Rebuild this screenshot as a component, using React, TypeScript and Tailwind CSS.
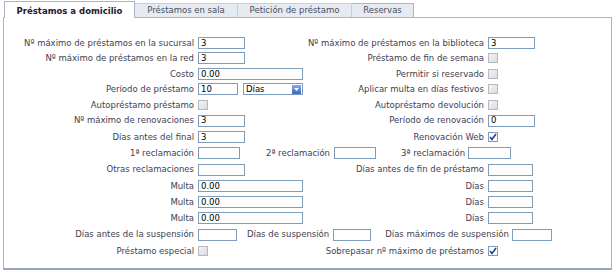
import React from "react";

const Input = ({ w, v = "" }: { w: number; v?: string }) => (
  <div
    className="h-[12px] border border-[#7f9db9] bg-white flex items-center pl-[2px] text-black text-[8.5px] leading-none shrink-0"
    style={{ width: w }}
  >
    {v}
  </div>
);

const Check = ({ on = false }: { on?: boolean }) =>
  on ? (
    <div className="w-[10px] h-[10px] border border-[#7f9db9] bg-white flex items-center justify-center">
      <svg width="8" height="8" viewBox="0 0 8 8">
        <path d="M1 4 L3 6.5 L7 1" stroke="#213f99" strokeWidth="1.6" fill="none" />
      </svg>
    </div>
  ) : (
    <div className="w-[10px] h-[10px] border border-[#b4bac4] bg-gradient-to-br from-[#f4f4f4] to-[#dcdcdc]" />
  );

const Select = () => (
  <div className="w-[60px] h-[12px] border border-[#7f9db9] bg-white flex items-center ml-[5px]">
    <span className="pl-[2px] flex-1 text-black text-[8.5px] leading-none">Días</span>
    <div className="w-[9px] h-[9px] mr-[1px] bg-gradient-to-b from-[#8aa9e8] to-[#3b67cf] flex items-center justify-center">
      <svg width="5" height="3" viewBox="0 0 5 3">
        <path d="M0 0 L5 0 L2.5 3 Z" fill="white" />
      </svg>
    </div>
  </div>
);

type Row = {
  l?: string;
  f?: React.ReactNode;
  r?: string;
  rf?: React.ReactNode;
};

const Std = ({ row, h }: { row: Row; h: string }) => (
  <div className={`flex items-center ${h}`}>
    <div className="w-[190px] text-right">{row.l}</div>
    <div className="w-[107px] ml-[4px] flex items-center">{row.f}</div>
    <div className="w-[179px] text-right">{row.r}</div>
    <div className="ml-[4px] flex items-center">{row.rf}</div>
  </div>
);

export default function App() {
  const rowsA: Row[] = [
    { l: "Nº máximo de préstamos en la sucursal", f: <Input w={47} v="3" />, r: "Nº máximo de préstamos en la biblioteca", rf: <Input w={47} v="3" /> },
    { l: "Nº máximo de préstamos en la red", f: <Input w={47} v="3" />, r: "Préstamo de fin de semana", rf: <Check /> },
    { l: "Costo", f: <Input w={105} v="0.00" />, r: "Permitir si reservado", rf: <Check /> },
    { l: "Período de préstamo", f: <><Input w={40} v="10" /><Select /></>, r: "Aplicar multa en días festivos", rf: <Check /> },
    { l: "Autopréstamo préstamo", f: <Check />, r: "Autopréstamo devolución", rf: <Check /> },
  ];
  const rowsB1: Row[] = [
    { l: "Nº máximo de renovaciones", f: <Input w={47} v="3" />, r: "Período de renovación", rf: <Input w={47} v="0" /> },
    { l: "Días antes del final", f: <Input w={47} v="3" />, r: "Renovación Web", rf: <Check on /> },
  ];
  const rowsB2: Row[] = [
    { l: "Otras reclamaciones", f: <Input w={47} />, r: "Días antes de fin de préstamo", rf: <Input w={45} /> },
    { l: "Multa", f: <Input w={105} v="0.00" />, r: "Días", rf: <Input w={45} /> },
    { l: "Multa", f: <Input w={105} v="0.00" />, r: "Días", rf: <Input w={45} /> },
    { l: "Multa", f: <Input w={105} v="0.00" />, r: "Días", rf: <Input w={45} /> },
  ];

  return (
    <div
      className="w-[615px] h-[276px] bg-white text-[#3e4152] text-[8.5px] leading-none whitespace-nowrap"
      style={{ fontFamily: '"DejaVu Sans", Verdana, sans-serif' }}
    >
      <div className="mx-[3px] pt-[1px]">
        <div className="flex h-[17px] pl-[1px] relative z-10">
          <div className="w-[131px] h-[17px] border border-b-0 border-[#a9b5c6] bg-white font-bold text-[#1e2030] flex items-center justify-center pt-[2px]">
            Préstamos a domicilio
          </div>
          <div className="flex self-end h-[15px] border-b border-[#a9b5c6] bg-[#e6ebf2] text-[#4a4e60]">
            <div className="w-[103px] border-t border-r border-[#c6cedb] flex items-center justify-center">Préstamos en sala</div>
            <div className="w-[114px] border-t border-r border-[#c6cedb] flex items-center justify-center">Petición de préstamo</div>
            <div className="w-[62px] border-t border-r border-[#a9b5c6] flex items-center justify-center">Reservas</div>
          </div>
        </div>
        <div className="-mt-px h-[253px] border border-[#a9b5c6] border-b-2 border-b-[#9aa6b8] pt-[17px]">
          {rowsA.map((r, i) => (
            <Std key={"a" + i} row={r} h="h-[15.5px]" />
          ))}
          {rowsB1.map((r, i) => (
            <Std key={"b" + i} row={r} h="h-[16.3px]" />
          ))}
          <div className="flex items-center h-[16.3px]">
            <div className="w-[190px] text-right">1ª reclamación</div>
            <div className="ml-[4px]"><Input w={42} /></div>
            <div className="ml-[26px]">2ª reclamación</div>
            <div className="ml-[4px]"><Input w={42} /></div>
            <div className="ml-[25px]">3ª reclamación</div>
            <div className="ml-[3px]"><Input w={43} /></div>
          </div>
          {rowsB2.map((r, i) => (
            <Std key={"c" + i} row={r} h="h-[16.3px]" />
          ))}
          <div className="flex items-center h-[16.3px]">
            <div className="w-[190px] text-right">Días antes de la suspensión</div>
            <div className="ml-[4px]"><Input w={39} /></div>
            <div className="ml-[10px]">Días de suspensión</div>
            <div className="ml-[4px]"><Input w={38} /></div>
            <div className="ml-[14px]">Días máximos de suspensión</div>
            <div className="ml-[3px]"><Input w={40} /></div>
          </div>
          <Std row={{ l: "Préstamo especial", f: <Check />, r: "Sobrepasar nº máximo de préstamos", rf: <Check on /> }} h="h-[16.3px]" />
        </div>
      </div>
    </div>
  );
}
